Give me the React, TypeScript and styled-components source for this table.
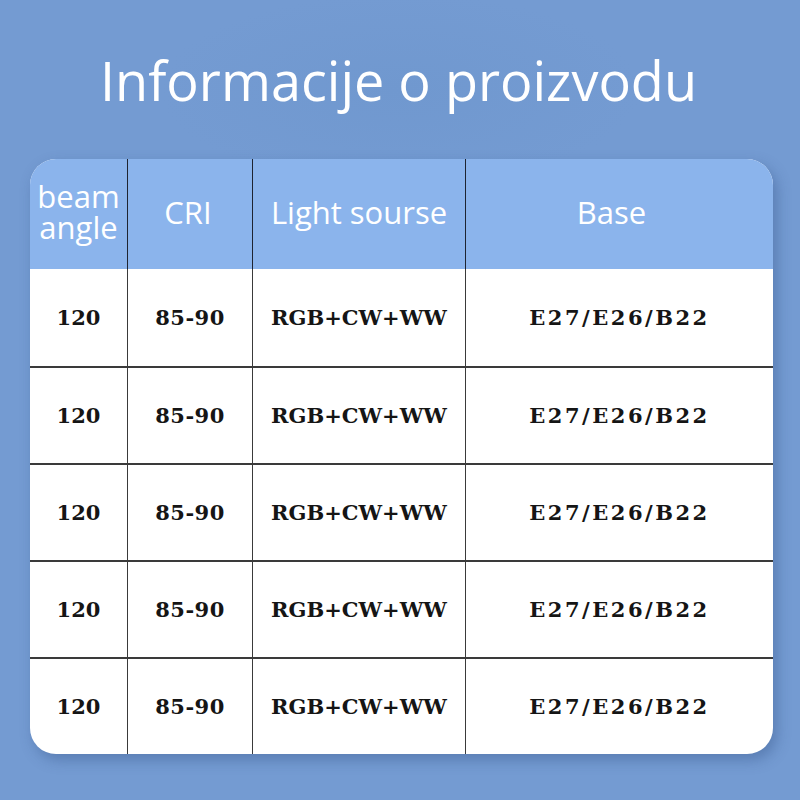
import React from "react";
import styled, { createGlobalStyle } from "styled-components";

const Global = createGlobalStyle`
  html, body { margin: 0; padding: 0; }
  body { width: 800px; height: 800px; overflow: hidden; }
`;

const Page = styled.div`
  width: 800px;
  height: 800px;
  box-sizing: border-box;
  background: radial-gradient(ellipse 300px 120px at 400px 90px, #7098cf 0%, #749bd2 80%);
  display: flex;
  flex-direction: column;
  align-items: center;
  padding: 0 27px 0 30px;
`;

const Title = styled.h1`
  margin: 0;
  height: 159px;
  display: flex;
  align-items: center;
  justify-content: center;
  font-family: "Open Sans", "Noto Sans", sans-serif;
  font-weight: 400;
  font-size: 54px;
  color: #ffffff;
  white-space: nowrap;
  padding-right: 6px;
  box-sizing: border-box;
`;

const Card = styled.div`
  width: 743px;
  border-radius: 26px;
  overflow: hidden;
  background: #ffffff;
  box-shadow: 4px 6px 14px rgba(40, 70, 120, 0.35);
  display: grid;
  grid-template-columns: 97px 125px 213px 1fr;
  grid-template-rows: 110px repeat(5, 97px);
`;

const HeadCell = styled.div<{ $first?: boolean; $shift?: number }>`
  background: #8bb4ec;
  color: #ffffff;
  font-family: "Open Sans", "Noto Sans", sans-serif;
  font-size: 31px;
  line-height: 31px;
  display: flex;
  align-items: center;
  justify-content: center;
  text-align: center;
  border-left: ${(p) => (p.$first ? "none" : "1.5px solid #1e2430")};
  padding-bottom: 4px;
  padding-right: ${(p) => p.$shift ?? 0}px;
  box-sizing: border-box;
`;

const Cell = styled.div<{ $first?: boolean; $top?: boolean; $spacing?: number }>`
  color: #151515;
  font-family: "DejaVu Serif", "Liberation Serif", serif;
  font-weight: 700;
  font-size: 21px;
  letter-spacing: ${(p) => p.$spacing ?? 0}px;
  display: flex;
  align-items: center;
  justify-content: center;
  border-left: ${(p) => (p.$first ? "none" : "1.5px solid #3a3a3a")};
  border-top: ${(p) => (p.$top ? "none" : "2px solid #3a3a3a")};
  box-sizing: border-box;
`;

const headers = ["beam\nangle", "CRI", "Light sourse", "Base"];
const headShift = [0, 4, 0, 16];
const row = ["120", "85-90", "RGB+CW+WW", "E27/E26/B22"];
const spacing = [0, 0.5, 0, 2.5];

export default function App() {
  return (
    <>
      <Global />
      <Page>
        <Title>Informacije o proizvodu</Title>
        <Card>
          {headers.map((h, i) => (
            <HeadCell key={h} $first={i === 0} $shift={headShift[i]}>
              {h.split("\n").map((l, j) => (
                <React.Fragment key={j}>
                  {j > 0 && <br />}
                  {l}
                </React.Fragment>
              ))}
            </HeadCell>
          ))}
          {[0, 1, 2, 3, 4].map((r) =>
            row.map((c, i) => (
              <Cell key={`${r}-${i}`} $first={i === 0} $top={r === 0} $spacing={spacing[i]}>
                {c}
              </Cell>
            ))
          )}
        </Card>
      </Page>
    </>
  );
}
